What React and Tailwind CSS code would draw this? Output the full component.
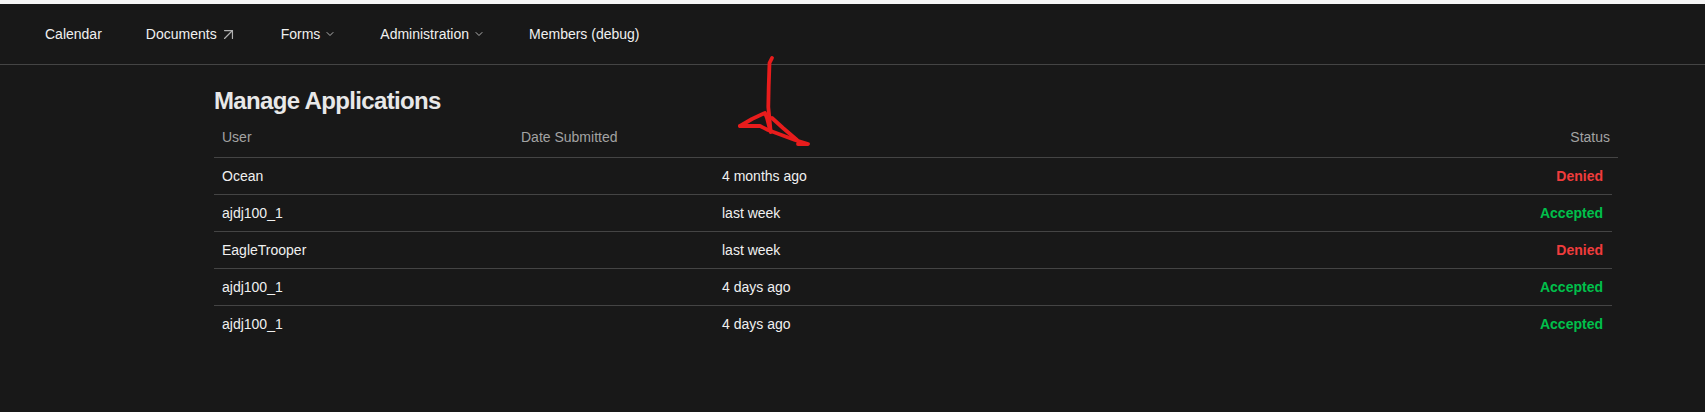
import { ArrowUpRight, ChevronDown } from "lucide-react";

const rows = [
  { user: "Ocean", date: "4 months ago", status: "Denied" },
  { user: "ajdj100_1", date: "last week", status: "Accepted" },
  { user: "EagleTrooper", date: "last week", status: "Denied" },
  { user: "ajdj100_1", date: "4 days ago", status: "Accepted" },
  { user: "ajdj100_1", date: "4 days ago", status: "Accepted" },
];

export default function App() {
  return (
    <div className="relative h-[412px] overflow-hidden bg-[#181818] border-t-4 border-[#f5f5f5] font-['Liberation_Sans',Arial,sans-serif] text-sm text-[#f0f0f0]">
      {/* NAV */}
      <nav className="flex items-center h-[61px] pl-[45px] border-b border-[#444444]">
        <a className="mr-[44px]">Calendar</a>
        <a className="flex items-center mr-[43px]">
          Documents
          <ArrowUpRight size={19} strokeWidth={1.5} className="ml-[2px] text-[#b0b0b0]" />
        </a>
        <a className="flex items-center mr-[44px]">
          Forms
          <ChevronDown size={12} strokeWidth={2} className="ml-[4px] text-[#b0b0b0]" />
        </a>
        <a className="flex items-center mr-[44px]">
          Administration
          <ChevronDown size={12} strokeWidth={2} className="ml-[4px] text-[#b0b0b0]" />
        </a>
        <a>Members (debug)</a>
      </nav>

      {/* CONTENT */}
      <main className="ml-[214px] w-[1404px]">
        <h1 className="mt-[20px] text-2xl leading-[32px] font-bold tracking-[-0.65px] text-[#e8e8e8]">
          Manage Applications
        </h1>

        <div className="flex items-center justify-between h-[41px] pl-2 pr-2 border-b border-[#444444] text-[#a3a3a3]">
          <div className="flex">
            <span className="w-[299px]">User</span>
            <span>Date Submitted</span>
          </div>
          <span>Status</span>
        </div>

        <div className="w-[1398px]">
          {rows.map((row, i) => (
            <div
              key={i}
              className={`flex items-center h-[37px] pl-2 pr-[9px] border-b ${
                i < rows.length - 1 ? "border-[#444444]" : "border-transparent"
              }`}
            >
              <span className="w-[500px]">{row.user}</span>
              <span className="flex-1">{row.date}</span>
              <span
                className={`font-bold ${
                  row.status === "Denied" ? "text-[#f03c3c]" : "text-[#00c04b]"
                }`}
              >
                {row.status}
              </span>
            </div>
          ))}
        </div>
      </main>

      {/* RED SCRIBBLE */}
      <svg
        className="absolute left-[680px] top-[36px]"
        width="180"
        height="130"
        viewBox="0 0 180 130"
        fill="none"
        stroke="#e81c1c"
        strokeWidth="3.8"
        strokeLinecap="round"
        strokeLinejoin="round"
      >
        <path d="M92 18 89.5 23 88.7 47 88.3 67 90.7 92" />
        <path d="M60 86 72 79 85 73 87 78 90 90" />
        <path d="M60 86 80 86 88 90 115 100 128 104 118 104" />
        <path d="M92 78 103 88 117 100" />
      </svg>
    </div>
  );
}
